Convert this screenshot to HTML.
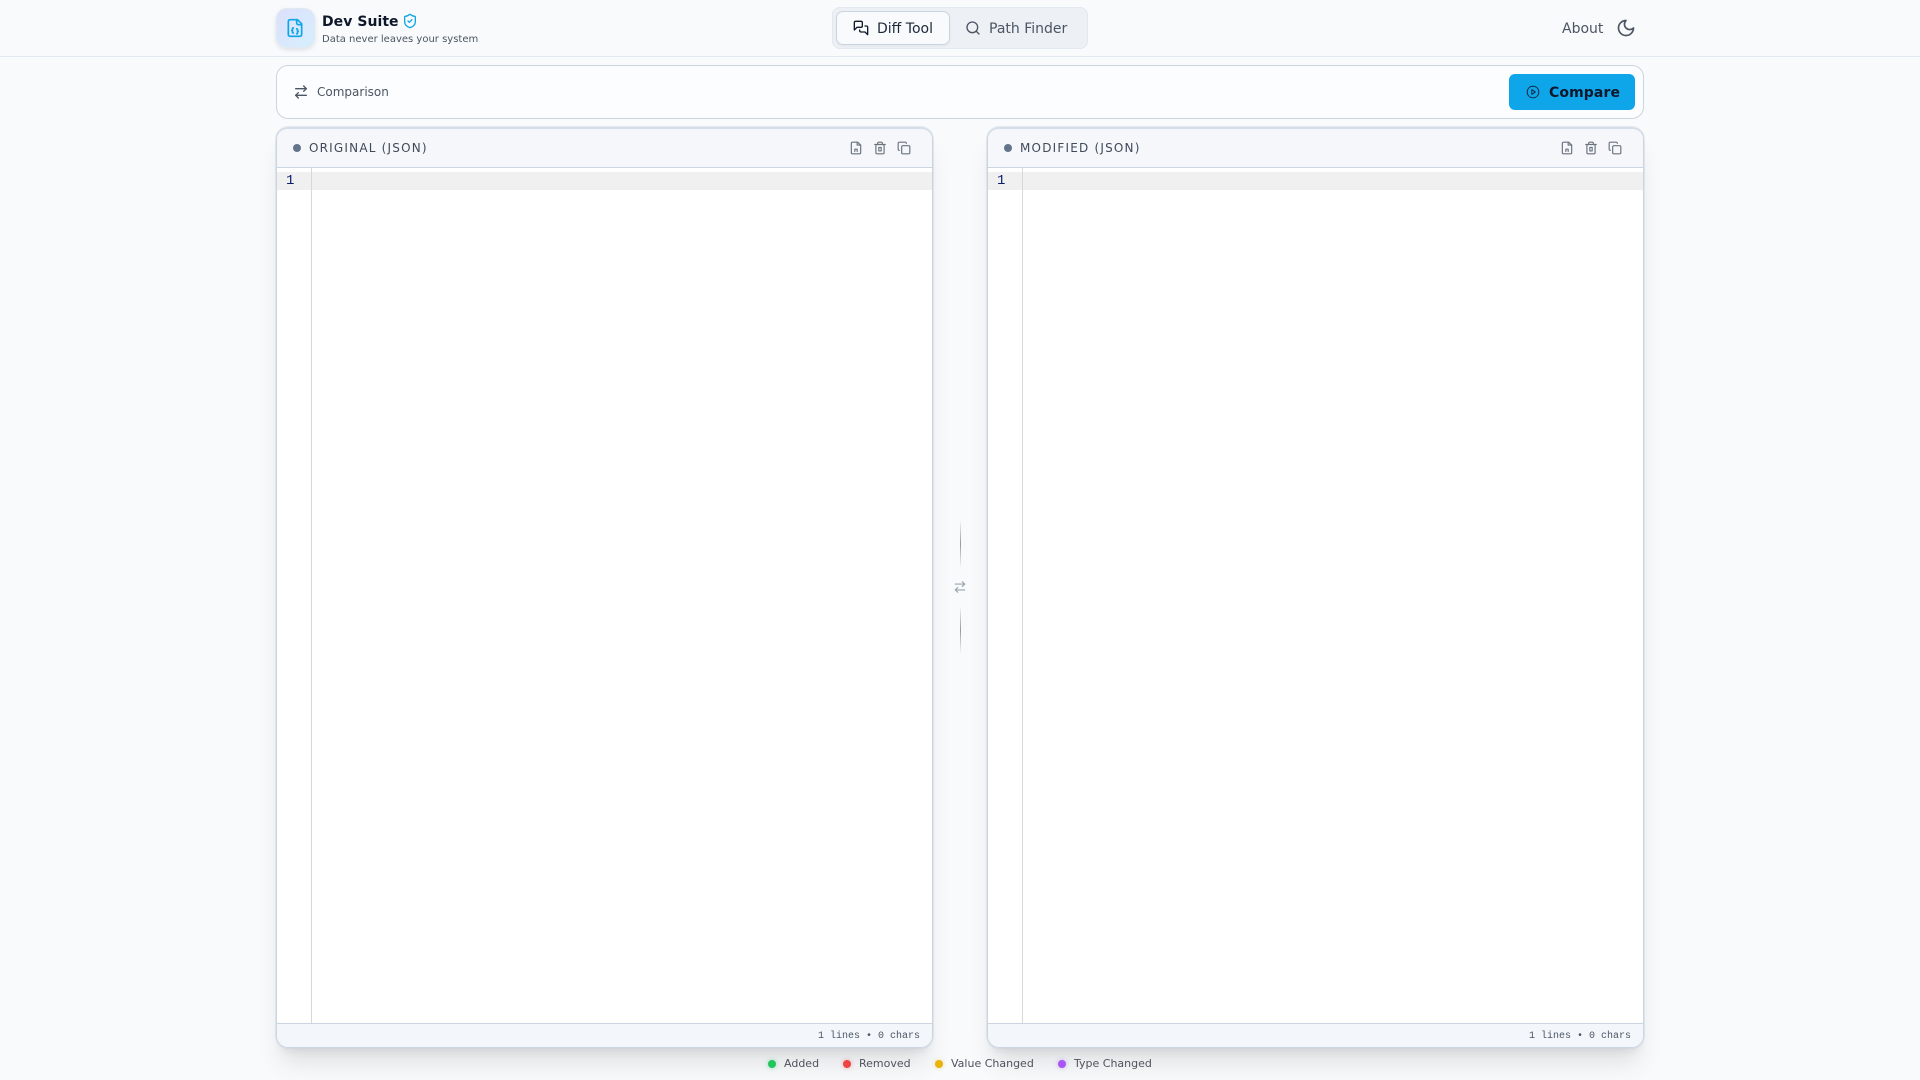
<!DOCTYPE html>
<html lang="en">
<head>
<meta charset="utf-8">
<title>Dev Suite</title>
<style>
*{box-sizing:border-box;margin:0;padding:0}
html,body{width:1920px;height:1080px;overflow:hidden}
body{background:#f8fafc;font-family:"DejaVu Sans",sans-serif;position:relative;color:#0f172a}
.abs{position:absolute}
header{position:absolute;left:0;top:0;width:1920px;height:57px;border-bottom:1px solid #e2e8f0;background:#f8fafc}
.logo{left:276px;top:8px;width:39px;height:40px;border-radius:11px;background:linear-gradient(135deg,#dde0fb,#d5effd);border:1px solid #e2e8f0;box-shadow:0 2px 4px rgba(100,116,139,.18);}
.title{left:322px;top:13px;font-size:14px;font-weight:700;line-height:18px;color:#0f172a;letter-spacing:.05px;white-space:nowrap}
.sub{left:322px;top:33px;font-size:10px;line-height:14px;color:#4b5563;white-space:nowrap}
.nav{left:832px;top:7px;width:256px;height:42px;background:#edf0f5;border:1px solid #e2e8f0;border-radius:8px}
.tab{left:836px;top:11px;width:114px;height:34px;background:#f8fafc;border:1px solid #cbd5e1;border-radius:7px;box-shadow:0 1px 2px rgba(0,0,0,.05)}
.t14{font-size:14px;line-height:18px;white-space:nowrap}
.bar{left:276px;top:65px;width:1368px;height:54px;background:#fcfdfe;border:1px solid #cbd5e1;border-radius:12px}
.btn{left:1509px;top:74px;width:126px;height:36px;background:#0ea5e9;border-radius:6px}
.panel{top:127px;height:921px;width:657px;background:#fff;border:1px solid #cbd5e1;border-top:2px solid #d5dde8;border-radius:12px;overflow:hidden}
.shadow{top:127px;height:921px;width:657px;border-radius:12px;box-shadow:0 0 0 1px rgba(203,213,225,.45),0 20px 25px -5px rgba(0,0,0,.1),0 8px 10px -6px rgba(0,0,0,.1)}
.ph{left:0;top:0;right:0;height:39px;background:#f5f7fa;border-bottom:1px solid #cbd5e1}
.dot{width:8px;height:8px;border-radius:50%;background:#64748b}
.lbl{font-size:12px;line-height:16px;letter-spacing:1.2px;color:#404a5a;white-space:nowrap}
.hl{left:0;right:0;top:43px;height:18px;background:#f0f0f0}
.gut{left:34px;top:39px;bottom:24px;width:1px;background:#d8d8d8}
.num{left:9px;top:43px;width:20px;font:14px/18px "Liberation Mono",monospace;color:#0b216f}
.pf{left:0;right:0;bottom:0;height:24px;background:#f3f7fb;border-top:1px solid #cbd5e1}
.stat{right:12px;top:6px;font:10px/13px "Liberation Mono",monospace;color:#4b5563;white-space:nowrap}
.leg{font-size:11px;line-height:14px;color:#52525b;white-space:nowrap;top:1057px}
.ldot{width:8px;height:8px;border-radius:50%;top:1060px}
svg{position:absolute;fill:none;stroke-linecap:round;stroke-linejoin:round}
.vl{width:1px;left:960px}
</style>
</head>
<body>
<div class="abs shadow" style="left:276px"></div>
<div class="abs shadow" style="left:987px"></div>
<header></header>

<div class="abs logo"></div>
<svg style="left:285px;top:18px" width="20" height="20" viewBox="0 0 24 24" stroke="#0ea5e9" stroke-width="2"><path d="M15 2H6a2 2 0 0 0-2 2v16a2 2 0 0 0 2 2h12a2 2 0 0 0 2-2V7Z"/><path d="M14 2v4a2 2 0 0 0 2 2h4"/><path d="M10 12a1 1 0 0 0-1 1v1a1 1 0 0 1-1 1 1 1 0 0 1 1 1v1a1 1 0 0 0 1 1"/><path d="M14 19a1 1 0 0 0 1-1v-1a1 1 0 0 1 1-1 1 1 0 0 1-1-1v-1a1 1 0 0 0-1-1"/></svg>
<div class="abs title">Dev Suite</div>
<svg style="left:402px;top:13px" width="16" height="16" viewBox="0 0 24 24" stroke="#0ea5e9" stroke-width="2"><path d="M20 13c0 5-3.5 7.5-7.66 8.95a1 1 0 0 1-.67-.01C7.5 20.5 4 18 4 13V6a1 1 0 0 1 1-1c2 0 4.500-1.200 6.240-2.720a1.170 1.170 0 0 1 1.520 0C14.510 3.810 17 5 19 5a1 1 0 0 1 1 1z"/><path d="m9 12 2 2 4-4"/></svg>
<div class="abs sub">Data never leaves your system</div>

<div class="abs nav"></div>
<div class="abs tab"></div>
<svg style="left:853px;top:20px" width="16" height="16" viewBox="0 0 24 24" stroke="#0f172a" stroke-width="2"><path d="M14 9a2 2 0 0 1-2 2H6l-4 4V4a2 2 0 0 1 2-2h8a2 2 0 0 1 2 2z"/><path d="M18 9h2a2 2 0 0 1 2 2v11l-4-4h-6a2 2 0 0 1-2-2v-1"/></svg>
<div class="abs t14" style="left:877px;top:20px;color:#1e293b">Diff Tool</div>
<svg style="left:965px;top:20px" width="16" height="16" viewBox="0 0 24 24" stroke="#4b5563" stroke-width="2"><circle cx="11" cy="11" r="8"/><path d="m21 21-4.300-4.300"/></svg>
<div class="abs t14" style="left:989px;top:20px;color:#4b5563">Path Finder</div>

<div class="abs t14" style="left:1562px;top:20px;color:#4b5563">About</div>
<svg style="left:1616px;top:18px" width="20" height="20" viewBox="0 0 24 24" stroke="#4b5563" stroke-width="2"><path d="M12 3a6 6 0 0 0 9 9 9 9 0 1 1-9-9Z"/></svg>

<div class="abs bar"></div>
<svg style="left:293px;top:84px" width="16" height="16" viewBox="0 0 24 24" stroke="#4b5563" stroke-width="2"><path d="m16 3 4 4-4 4"/><path d="M20 7H4"/><path d="m8 21-4-4 4-4"/><path d="M4 17h16"/></svg>
<div class="abs" style="left:317px;top:84px;font-size:12px;line-height:16px;color:#4b5563;white-space:nowrap">Comparison</div>
<div class="abs btn"></div>
<svg style="left:1526px;top:85px" width="14" height="14" viewBox="0 0 24 24" stroke="#0f172a" stroke-width="1.500"><circle cx="12" cy="12" r="10"/><path d="m10 8 6 4-6 4z"/></svg>
<div class="abs" style="left:1549px;top:84px;font-size:14px;line-height:18px;font-weight:700;color:#0f172a;letter-spacing:.1px;white-space:nowrap">Compare</div>

<div class="abs panel" style="left:276px">
  <div class="abs ph"></div>
  <div class="abs dot" style="left:16px;top:15px"></div>
  <div class="abs lbl" style="left:32px;top:11px">ORIGINAL (JSON)</div>
  <div class="abs hl"></div>
  <div class="abs gut"></div>
  <div class="abs num">1</div>
  <div class="abs pf"><div class="abs stat">1 lines • 0 chars</div></div>
  <svg style="left:572px;top:12px" width="14" height="14" viewBox="0 0 24 24" stroke="#6b7280" stroke-width="2"><path d="M15 2H6a2 2 0 0 0-2 2v16a2 2 0 0 0 2 2h12a2 2 0 0 0 2-2V7Z"/><path d="M14 2v5h6"/><path d="M10 18v-4h4v4"/></svg>
  <svg style="left:596px;top:12px" width="14" height="14" viewBox="0 0 24 24" stroke="#6b7280" stroke-width="2"><path d="M3 6h18"/><path d="M19 6v14a2 2 0 0 1-2 2H7a2 2 0 0 1-2-2V6"/><path d="M8 6V4a2 2 0 0 1 2-2h4a2 2 0 0 1 2 2v2"/><path d="M10 11h4v6h-4z"/></svg>
  <svg style="left:620px;top:12px" width="14" height="14" viewBox="0 0 24 24" stroke="#6b7280" stroke-width="2"><rect x="8" y="8" width="14" height="14" rx="2"/><path d="M4 16c-1.100 0-2-.9-2-2V4c0-1.100.9-2 2-2h10c1.100 0 2 .9 2 2"/></svg>
</div>

<div class="abs panel" style="left:987px">
  <div class="abs ph"></div>
  <div class="abs dot" style="left:16px;top:15px"></div>
  <div class="abs lbl" style="left:32px;top:11px">MODIFIED (JSON)</div>
  <div class="abs hl"></div>
  <div class="abs gut"></div>
  <div class="abs num">1</div>
  <div class="abs pf"><div class="abs stat">1 lines • 0 chars</div></div>
  <svg style="left:572px;top:12px" width="14" height="14" viewBox="0 0 24 24" stroke="#6b7280" stroke-width="2"><path d="M15 2H6a2 2 0 0 0-2 2v16a2 2 0 0 0 2 2h12a2 2 0 0 0 2-2V7Z"/><path d="M14 2v5h6"/><path d="M10 18v-4h4v4"/></svg>
  <svg style="left:596px;top:12px" width="14" height="14" viewBox="0 0 24 24" stroke="#6b7280" stroke-width="2"><path d="M3 6h18"/><path d="M19 6v14a2 2 0 0 1-2 2H7a2 2 0 0 1-2-2V6"/><path d="M8 6V4a2 2 0 0 1 2-2h4a2 2 0 0 1 2 2v2"/><path d="M10 11h4v6h-4z"/></svg>
  <svg style="left:620px;top:12px" width="14" height="14" viewBox="0 0 24 24" stroke="#6b7280" stroke-width="2"><rect x="8" y="8" width="14" height="14" rx="2"/><path d="M4 16c-1.100 0-2-.9-2-2V4c0-1.100.9-2 2-2h10c1.100 0 2 .9 2 2"/></svg>
</div>

<div class="abs vl" style="top:520px;height:48px;background:linear-gradient(180deg,rgba(150,150,150,0),#9a9a9a 50%,rgba(150,150,150,0))"></div>
<svg style="left:953px;top:580px" width="14" height="14" viewBox="0 0 24 24" stroke="#9ca3af" stroke-width="2"><path d="m16 3 4 4-4 4"/><path d="M20 7H4"/><path d="m8 21-4-4 4-4"/><path d="M4 17h16"/></svg>
<div class="abs vl" style="top:606px;height:48px;background:linear-gradient(180deg,rgba(150,150,150,0),#9a9a9a 50%,rgba(150,150,150,0))"></div>

<div class="abs ldot" style="left:768px;background:#22c55e;box-shadow:0 0 4px rgba(34,197,94,.4)"></div>
<div class="abs leg" style="left:784px">Added</div>
<div class="abs ldot" style="left:843px;background:#ef4444;box-shadow:0 0 4px rgba(239,68,68,.4)"></div>
<div class="abs leg" style="left:859px">Removed</div>
<div class="abs ldot" style="left:935px;background:#eab308;box-shadow:0 0 4px rgba(234,179,8,.4)"></div>
<div class="abs leg" style="left:951px">Value Changed</div>
<div class="abs ldot" style="left:1058px;background:#a855f7;box-shadow:0 0 4px rgba(168,85,247,.4)"></div>
<div class="abs leg" style="left:1074px">Type Changed</div>
</body>
</html>
